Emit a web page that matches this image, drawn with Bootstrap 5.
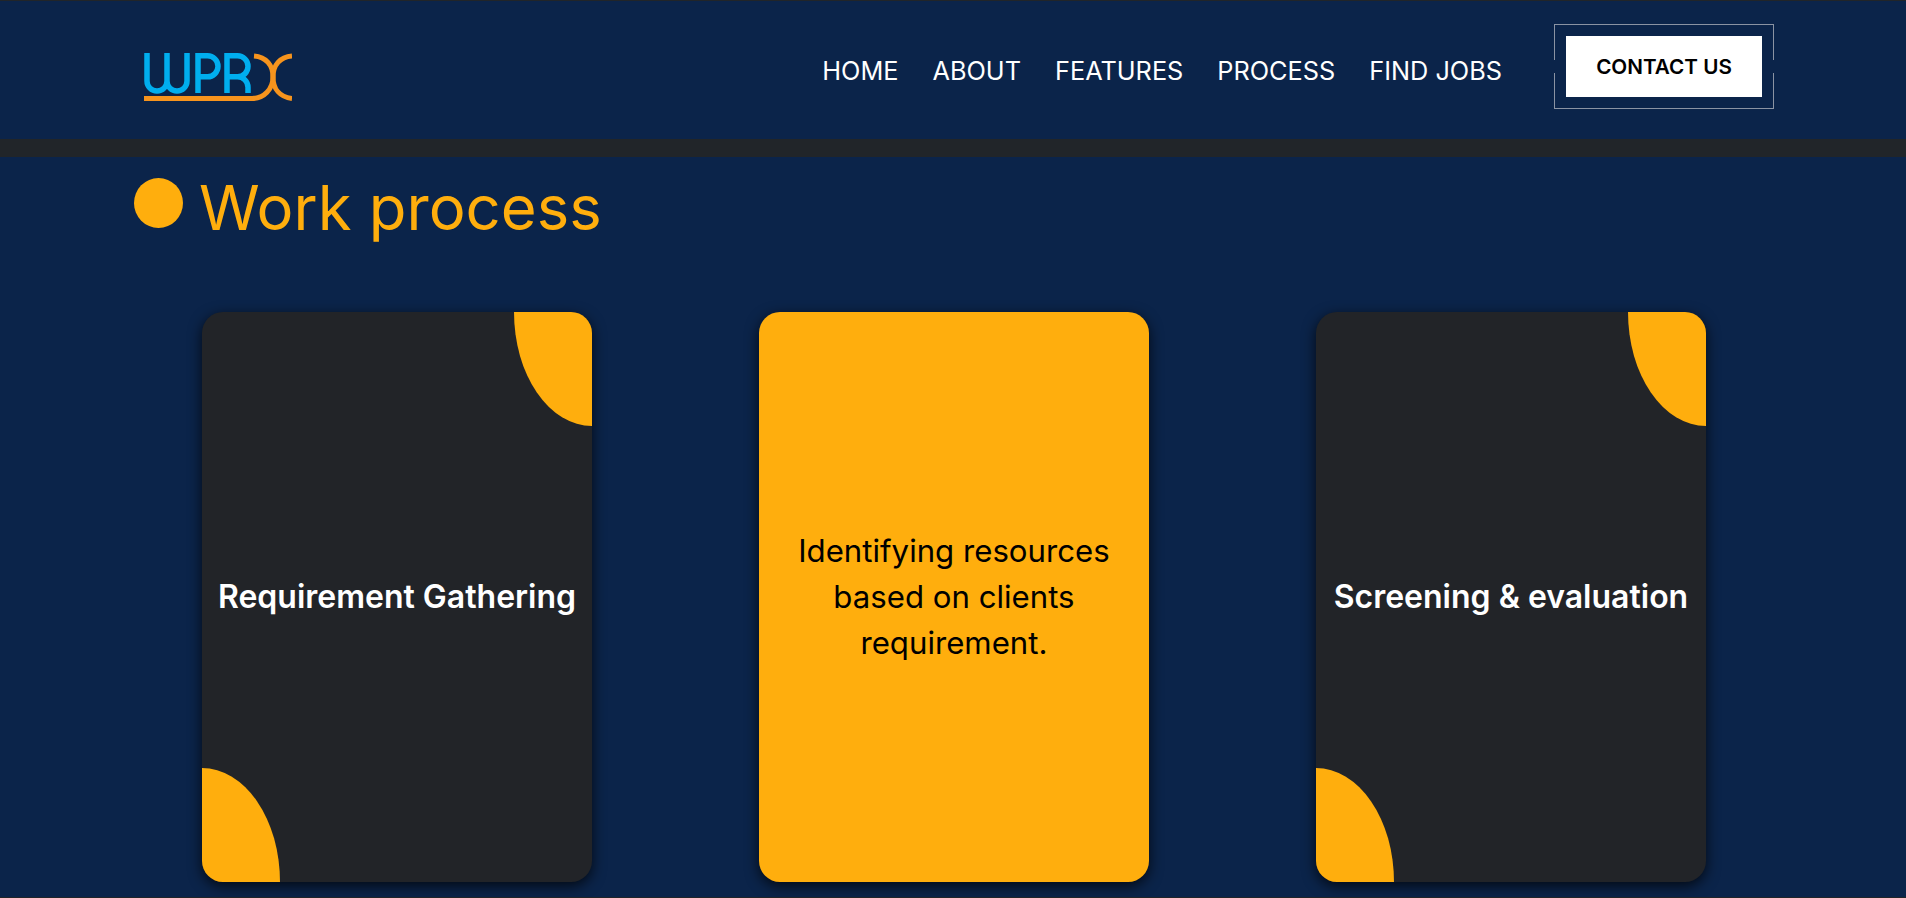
<!doctype html>
<html lang="en">
<head>
<meta charset="utf-8">
<title>WPRX</title>
<link rel="stylesheet" href="https://cdn.jsdelivr.net/npm/bootstrap@5.3.0/dist/css/bootstrap.min.css">
<style>
html,body{height:100%;overflow:hidden}
body{background:#0b244a;font-family:"Inter","Liberation Sans",sans-serif;border-top:1px solid #212529;border-bottom:1px solid #212529}
.top-bar{height:138px;padding:0 132px 0 144px}
.brand-logo{display:block;width:148px;height:48px;margin-top:14px}
.menu-link{color:#fff;font-size:25.3px;line-height:36px;padding:0;text-decoration:none}
.menu-gap{gap:34px;margin-right:52px;margin-top:2px}
.frame-box{position:relative;border:1px solid #8a93a3;padding:11px;margin-top:-7px}
.frame-box::before,.frame-box::after{content:"";position:absolute;top:35px;width:3px;height:13px;background:#0b244a}
.frame-box::before{left:-2px}
.frame-box::after{right:-2px}
.contact-btn{display:flex;align-items:center;justify-content:center;width:196px;height:61px;background:#fff;color:#000;font-weight:600;font-size:20.7px;border-radius:0;border:0;padding:1px 0 0}
.stripe{height:18px;background:#212529}
.heading-row{padding:21px 0 0 134px;gap:16px;height:155px}
.heading-dot{width:49px;height:50px;border-radius:50%;background:#ffae0d;flex:none}
.heading-text{color:#ffae0d;font-size:61.6px;line-height:60px;font-weight:400;margin:0}
.cards-wrap{padding:0 116.5px 0 118.5px}
.step-box{position:relative;overflow:hidden;width:390px;height:570px;border-radius:21px;background:#222428;color:#fff;box-shadow:0 4px 14px rgba(0,0,0,.75);font-weight:600;font-size:32px;line-height:46px;text-align:center;padding:0 12px}
.step-box.step-hi{background:#ffae0d;color:#000;font-weight:400;font-size:31.2px;padding:0 30px}
.corner-a,.corner-b{position:absolute;width:78px;height:114px;background:#ffae0d}
.corner-a{top:0;right:0;border-bottom-left-radius:100%}
.corner-b{bottom:0;left:0;border-top-right-radius:100%}
</style>
</head>
<body>
<nav class="top-bar d-flex align-items-center justify-content-between">
  <svg class="brand-logo" viewBox="0 0 148 48" fill="none" role="img" aria-label="WPRX">
    <g stroke="#00aeef" stroke-width="5.5">
      <path d="M3 0V28a10 10 0 0 0 20 0V0M23 28a10 10 0 0 0 20 0V0"/>
      <path d="M54 40V2.8H63.5a10.5 10.5 0 0 1 0 21H54"/>
      <path d="M83 40V2.8H93.5a10.5 10.5 0 0 1 0 21H83M93.5 23.8a10.5 10.5 0 0 1 10.5 10.5V40"/>
    </g>
    <g stroke="#f7941d" stroke-width="5">
      <path d="M148 3C136 4 129 12 129 24C129 36 120 45.5 108 45.5H0"/>
      <path d="M110 3C122 4 129 12 129 24C129 36 136 44 148 45.5"/>
    </g>
  </svg>
  <div class="d-flex align-items-center">
    <div class="d-flex menu-gap">
      <a class="menu-link" href="#">HOME</a>
      <a class="menu-link" href="#">ABOUT</a>
      <a class="menu-link" href="#">FEATURES</a>
      <a class="menu-link" href="#">PROCESS</a>
      <a class="menu-link" href="#">FIND JOBS</a>
    </div>
    <div class="frame-box"><a class="btn contact-btn" href="#">CONTACT US</a></div>
  </div>
</nav>
<div class="stripe"></div>
<section>
  <div class="heading-row d-flex align-items-start">
    <span class="heading-dot"></span>
    <h1 class="heading-text">Work process</h1>
  </div>
  <div class="cards-wrap row g-0">
    <div class="col-4 d-flex justify-content-center">
      <div class="step-box d-flex align-items-center justify-content-center"><span class="corner-a"></span><span class="corner-b"></span><span>Requirement Gathering</span></div>
    </div>
    <div class="col-4 d-flex justify-content-center">
      <div class="step-box step-hi d-flex align-items-center justify-content-center"><span>Identifying resources based on clients requirement.</span></div>
    </div>
    <div class="col-4 d-flex justify-content-center">
      <div class="step-box d-flex align-items-center justify-content-center"><span class="corner-a"></span><span class="corner-b"></span><span>Screening &amp; evaluation</span></div>
    </div>
  </div>
</section>
</body>
</html>
